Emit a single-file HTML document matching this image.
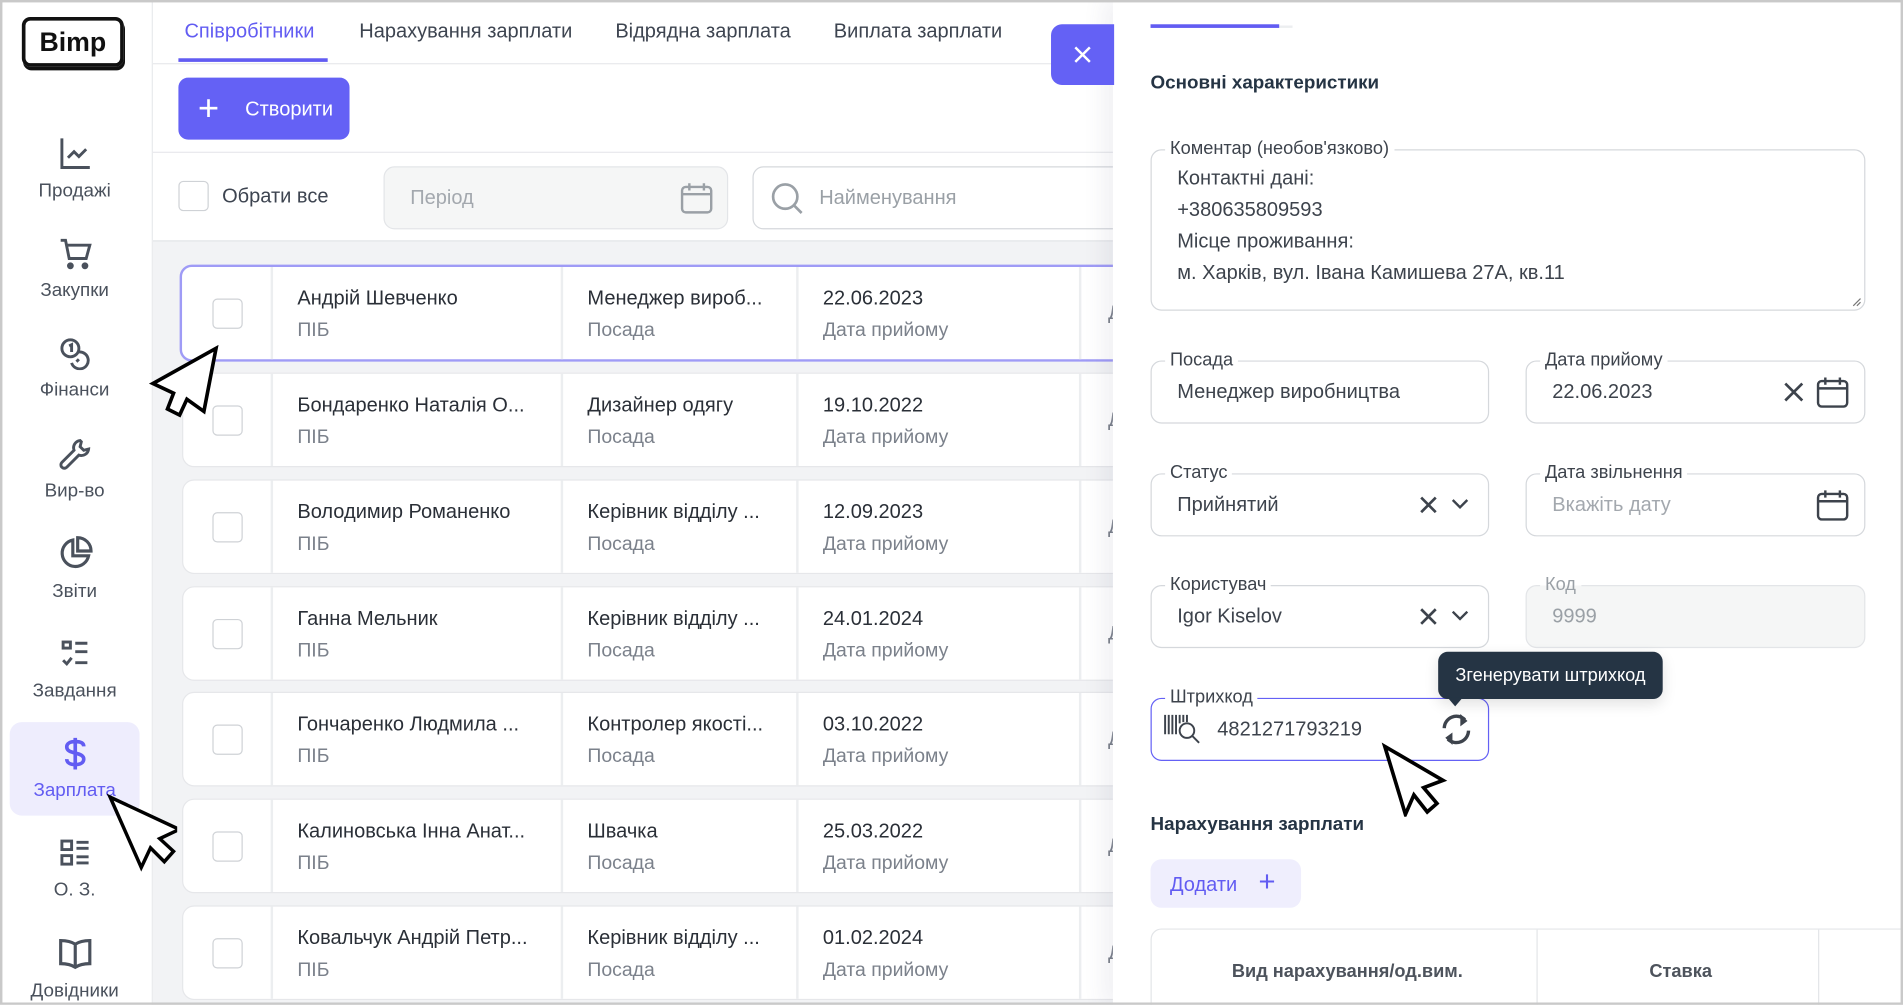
<!DOCTYPE html>
<html><head><meta charset="utf-8">
<style>
html,body{margin:0;padding:0;background:#fff;overflow:hidden;width:1903px;height:1005px}
#s{position:absolute;left:0;top:0;width:1568px;height:828px;transform:scale(1.21365);transform-origin:0 0;font-family:"Liberation Sans","Noto Sans CJK SC",sans-serif;color:#2a2f37;background:#fff;overflow:hidden}
.a{position:absolute;white-space:nowrap}
.t16{font-size:16.5px}
.nav{position:absolute;left:8px;width:107px;text-align:center;font-size:15.5px;color:#4a515c}
.nav svg{display:block;margin:0 auto 8px}
.row{position:absolute;left:150px;width:800px;height:76px;background:#fff;border:1px solid #e6e7ea;border-radius:10px}
.row .cb{position:absolute;left:24px;top:26px;width:23px;height:23px;border:1.5px solid #cfd2d6;border-radius:4px}
.row .d{position:absolute;top:0;bottom:0;width:2px;background:#eceef0}
.row .n{position:absolute;top:17px;font-size:16.5px;color:#2a2f37}
.row .l{position:absolute;top:44px;font-size:16px;color:#7b818b}
.fs{position:absolute;border:1px solid #d5d8dc;border-radius:9px;background:#fff}
.fs .lg{position:absolute;top:-10px;left:11px;background:#fff;padding:0 4px;font-size:15px;color:#3d434c}
.fs .v{position:absolute;left:21px;top:16px;font-size:16.5px;color:#3d434c}
</style></head><body><div id="s">
<div class="a" style="left:0;top:0;width:1564px;height:824px;border:2px solid #c9c9c9;z-index:50;pointer-events:none"></div>

<div class="a" style="left:0;top:0;width:125px;height:828px;background:#fff;border-right:1px solid #e9eaec"></div>
<div class="a" style="left:18px;top:14px;width:84px;height:41px;border:3px solid #111;border-radius:7px;box-shadow:1px 3px 0 #111;box-sizing:border-box;text-align:center;font-weight:bold;font-size:22px;line-height:35px;color:#111">Bimp</div>

<div class="nav" style="top:113px"><svg width="28" height="28" viewBox="0 0 28 28" fill="none" stroke="#4a515c" stroke-width="2.4"><path d="M3 1v24h23"/><path d="M8 17l5-5 4 4 6-6"/></svg>Продажі</div>
<div class="nav" style="top:195px"><svg width="28" height="28" viewBox="0 0 28 28" fill="none" stroke="#4a515c" stroke-width="2.4"><path d="M2 3h4l3 15h14l3-11H7"/><circle cx="10" cy="24" r="1.6" fill="#4a515c"/><circle cx="22" cy="24" r="1.6" fill="#4a515c"/></svg>Закупки</div>
<div class="nav" style="top:277px"><svg width="28" height="28" viewBox="0 0 28 28" fill="none" stroke="#4a515c" stroke-width="2.4"><circle cx="10" cy="10" r="7"/><path d="M9 8l2-1v6"/><path d="M17 13a7 7 0 1 1-6 9"/><path d="M17 19l-2 2"/></svg>Фінанси</div>
<div class="nav" style="top:360px"><svg width="28" height="28" viewBox="0 0 28 28" fill="none" stroke="#4a515c" stroke-width="2.4"><path d="M18 3a6 6 0 0 0-5 8L3 21a2.5 2.5 0 0 0 4 4l10-10a6 6 0 0 0 8-5l-4 1-3-3 1-4z"/></svg>Вир-во</div>
<div class="nav" style="top:441px"><svg width="30" height="30" viewBox="0 0 30 30" fill="none" stroke="#4a515c" stroke-width="2.6"><path d="M13 4a11 11 0 1 0 13 13H13z"/><path d="M17 2v11h11A11 11 0 0 0 17 2z"/></svg>Звіти</div>
<div class="nav" style="top:525px"><svg width="26" height="28" viewBox="0 0 26 28" fill="none" stroke="#4a515c" stroke-width="2.4"><rect x="3" y="4" width="6" height="5"/><path d="M13 5h10M13 12h10M13 21h10M3 19l3 3 4-5"/></svg>Завдання</div>
<div class="a" style="left:8px;top:595px;width:107px;height:77px;background:#eeedfd;border-radius:10px"></div>
<div class="nav" style="top:607px;color:#625cf2"><svg width="26" height="28" viewBox="0 0 26 28" fill="none" stroke="#625cf2" stroke-width="3"><path d="M13 1v26"/><path d="M20 8c0-3-3-4-7-4s-7 1.5-7 4.5 3 4 7 5 7 2 7 5-3 4.5-7 4.5-7-1.5-7-4.5"/></svg>Зарплата</div>
<div class="nav" style="top:689px"><svg width="28" height="28" viewBox="0 0 28 28" fill="none" stroke="#4a515c" stroke-width="2.4"><rect x="3" y="4" width="8" height="7"/><rect x="3" y="16" width="8" height="7"/><path d="M15 5h10M15 10h10M15 17h10M15 22h10"/></svg>О. З.</div>
<div class="nav" style="top:772px"><svg width="30" height="28" viewBox="0 0 30 28" fill="none" stroke="#4a515c" stroke-width="2.6"><path d="M15 6c-3-2-7-3-12-3v19c5 0 9 1 12 3 3-2 7-3 12-3V3c-5 0-9 1-12 3zM15 6v19"/></svg>Довідники</div>

<div class="a" style="left:126px;top:52px;width:800px;height:1px;background:#e8e9ec"></div>
<div class="a t16" style="left:152px;top:17px;color:#625cf2">Співробітники</div>
<div class="a" style="left:147px;top:48px;width:123px;height:3px;background:#625cf2"></div>
<div class="a t16" style="left:296px;top:17px;color:#3d4450">Нарахування зарплати</div>
<div class="a t16" style="left:507px;top:17px;color:#3d4450">Відрядна зарплата</div>
<div class="a t16" style="left:687px;top:17px;color:#3d4450">Виплата зарплати</div>
<div class="a" style="left:147px;top:64px;width:141px;height:51px;background:#6461f5;border-radius:8px;color:#fff;font-size:16.5px;line-height:51px"><span style="position:absolute;left:16px;top:0;font-size:30px;font-weight:300">+</span><span style="position:absolute;left:55px;top:1px">Створити</span></div>
<div class="a" style="left:126px;top:125px;width:800px;height:1px;background:#e8e9ec"></div>
<div class="a" style="left:147px;top:149px;width:23px;height:23px;border:1.5px solid #cfd2d6;border-radius:4px"></div>
<div class="a t16" style="left:183px;top:153px;color:#3d4450">Обрати все</div>
<div class="a" style="left:316px;top:137px;width:282px;height:50px;background:#f5f6f6;border:1px solid #e3e5e8;border-radius:9px"><span style="position:absolute;left:21px;top:16px;font-size:16.5px;color:#a3a8ae">Період</span><svg style="position:absolute;left:243px;top:11px" width="28" height="28" viewBox="0 0 28 28" fill="none" stroke="#9aa0a6" stroke-width="2"><rect x="2" y="5" width="24" height="21" rx="3"/><path d="M2 11h24M8 2v6M20 2v6"/></svg></div>
<div class="a" style="left:620px;top:137px;width:320px;height:50px;background:#fff;border:1px solid #d5d8dc;border-radius:9px"><svg style="position:absolute;left:14px;top:12px" width="28" height="28" viewBox="0 0 28 28" fill="none" stroke="#9aa0a6" stroke-width="2.2"><circle cx="12" cy="12" r="10"/><path d="M19.5 19.5l6 6"/></svg><span style="position:absolute;left:54px;top:16px;font-size:16.5px;color:#9aa0a6">Найменування</span></div>
<div class="a" style="left:126px;top:198px;width:800px;height:630px;background:#f2f3f5;border-top:1px solid #e3e5e8"></div>

<div class="row" style="top:218px;left:148px;border:2px solid #9f9bf6;height:76px"><div class="cb" style="left:25px;top:26px"></div><div class="d" style="left:73px"></div><div class="n" style="left:95px">Андрій Шевченко</div><div class="l" style="left:95px">ПІБ</div><div class="d" style="left:312px"></div><div class="n" style="left:334px">Менеджер вироб...</div><div class="l" style="left:334px">Посада</div><div class="d" style="left:506px"></div><div class="n" style="left:528px">22.06.2023</div><div class="l" style="left:528px">Дата прийому</div><div class="d" style="left:739px"></div><div class="l" style="left:763px;top:30px">Д</div></div>

<div class="row" style="top:307px"><div class="cb"></div><div class="d" style="left:72px"></div><div class="n" style="left:94px">Бондаренко Наталія О...</div><div class="l" style="left:94px">ПІБ</div><div class="d" style="left:311px"></div><div class="n" style="left:333px">Дизайнер одягу</div><div class="l" style="left:333px">Посада</div><div class="d" style="left:505px"></div><div class="n" style="left:527px">19.10.2022</div><div class="l" style="left:527px">Дата прийому</div><div class="d" style="left:738px"></div><div class="l" style="left:762px;top:30px">Д</div></div>
<div class="row" style="top:395px"><div class="cb"></div><div class="d" style="left:72px"></div><div class="n" style="left:94px">Володимир Романенко</div><div class="l" style="left:94px">ПІБ</div><div class="d" style="left:311px"></div><div class="n" style="left:333px">Керівник відділу ...</div><div class="l" style="left:333px">Посада</div><div class="d" style="left:505px"></div><div class="n" style="left:527px">12.09.2023</div><div class="l" style="left:527px">Дата прийому</div><div class="d" style="left:738px"></div><div class="l" style="left:762px;top:30px">Д</div></div>
<div class="row" style="top:483px"><div class="cb"></div><div class="d" style="left:72px"></div><div class="n" style="left:94px">Ганна Мельник</div><div class="l" style="left:94px">ПІБ</div><div class="d" style="left:311px"></div><div class="n" style="left:333px">Керівник відділу ...</div><div class="l" style="left:333px">Посада</div><div class="d" style="left:505px"></div><div class="n" style="left:527px">24.01.2024</div><div class="l" style="left:527px">Дата прийому</div><div class="d" style="left:738px"></div><div class="l" style="left:762px;top:30px">Д</div></div>
<div class="row" style="top:570px"><div class="cb"></div><div class="d" style="left:72px"></div><div class="n" style="left:94px">Гончаренко Людмила ...</div><div class="l" style="left:94px">ПІБ</div><div class="d" style="left:311px"></div><div class="n" style="left:333px">Контролер якості...</div><div class="l" style="left:333px">Посада</div><div class="d" style="left:505px"></div><div class="n" style="left:527px">03.10.2022</div><div class="l" style="left:527px">Дата прийому</div><div class="d" style="left:738px"></div><div class="l" style="left:762px;top:30px">Д</div></div>
<div class="row" style="top:658px"><div class="cb"></div><div class="d" style="left:72px"></div><div class="n" style="left:94px">Калиновська Інна Анат...</div><div class="l" style="left:94px">ПІБ</div><div class="d" style="left:311px"></div><div class="n" style="left:333px">Швачка</div><div class="l" style="left:333px">Посада</div><div class="d" style="left:505px"></div><div class="n" style="left:527px">25.03.2022</div><div class="l" style="left:527px">Дата прийому</div><div class="d" style="left:738px"></div><div class="l" style="left:762px;top:30px">Д</div></div>
<div class="row" style="top:746px"><div class="cb"></div><div class="d" style="left:72px"></div><div class="n" style="left:94px">Ковальчук Андрій Петр...</div><div class="l" style="left:94px">ПІБ</div><div class="d" style="left:311px"></div><div class="n" style="left:333px">Керівник відділу ...</div><div class="l" style="left:333px">Посада</div><div class="d" style="left:505px"></div><div class="n" style="left:527px">01.02.2024</div><div class="l" style="left:527px">Дата прийому</div><div class="d" style="left:738px"></div><div class="l" style="left:762px;top:30px">Д</div></div>

<div class="a" style="left:866px;top:20px;width:52px;height:50px;background:#6461f5;border-radius:9px 0 0 9px;z-index:5"><svg style="position:absolute;left:19px;top:18px" width="14" height="14" viewBox="0 0 14 14" stroke="#fff" stroke-width="2"><path d="M1 1l12 12M13 1L1 13"/></svg></div>

<div class="a" style="left:917px;top:0;width:651px;height:828px;background:#fff;box-shadow:-8px 0 16px rgba(80,80,120,0.08)"></div>
<div class="a" style="left:948px;top:21px;width:117px;height:2px;background:#eceef0"></div>
<div class="a" style="left:948px;top:20px;width:106px;height:3px;background:#625cf2"></div>
<div class="a" style="left:948px;top:60px;font-size:15.5px;font-weight:bold;color:#253444">Основні характеристики</div>

<div class="fs" style="left:948px;top:123px;width:587px;height:131px"><div class="lg">Коментар (необов'язково)</div>
<div class="a" style="left:21px;top:10px;font-size:16.5px;color:#3d434c;line-height:26px;white-space:pre">Контактні дані:
+380635809593
Місце проживання:
м. Харків, вул. Івана Камишева 27А, кв.11</div>
<svg style="position:absolute;right:2px;bottom:2px" width="8" height="8" stroke="#777" stroke-width="1"><path d="M1 7l6-6M4 7l3-3"/></svg></div>

<div class="fs" style="left:948px;top:297px;width:277px;height:50px"><div class="lg">Посада</div><div class="v">Менеджер виробництва</div></div>
<div class="fs" style="left:1257px;top:297px;width:278px;height:50px"><div class="lg">Дата прийому</div><div class="v">22.06.2023</div>
<svg style="position:absolute;left:212px;top:17px" width="16" height="16" stroke="#3d434c" stroke-width="2.2"><path d="M1 1l14 14M15 1L1 15"/></svg>
<svg style="position:absolute;left:238px;top:11px" width="28" height="28" viewBox="0 0 28 28" fill="none" stroke="#3d434c" stroke-width="2"><rect x="2" y="5" width="24" height="21" rx="3"/><path d="M2 11h24M8 2v6M20 2v6"/></svg></div>

<div class="fs" style="left:948px;top:390px;width:277px;height:50px"><div class="lg">Статус</div><div class="v">Прийнятий</div>
<svg style="position:absolute;left:221px;top:18px" width="14" height="14" stroke="#3d434c" stroke-width="2.2"><path d="M1 1l12 12M13 1L1 13"/></svg>
<svg style="position:absolute;left:247px;top:20px" width="14" height="9" fill="none" stroke="#3d434c" stroke-width="2"><path d="M1 1l6 6 6-6"/></svg></div>
<div class="fs" style="left:1257px;top:390px;width:278px;height:50px"><div class="lg">Дата звільнення</div><div class="v" style="color:#a3a8ae">Вкажіть дату</div>
<svg style="position:absolute;left:238px;top:11px" width="28" height="28" viewBox="0 0 28 28" fill="none" stroke="#3d434c" stroke-width="2"><rect x="2" y="5" width="24" height="21" rx="3"/><path d="M2 11h24M8 2v6M20 2v6"/></svg></div>

<div class="fs" style="left:948px;top:482px;width:277px;height:50px"><div class="lg">Користувач</div><div class="v">Igor Kiselov</div>
<svg style="position:absolute;left:221px;top:18px" width="14" height="14" stroke="#3d434c" stroke-width="2.2"><path d="M1 1l12 12M13 1L1 13"/></svg>
<svg style="position:absolute;left:247px;top:20px" width="14" height="9" fill="none" stroke="#3d434c" stroke-width="2"><path d="M1 1l6 6 6-6"/></svg></div>
<div class="fs" style="left:1257px;top:482px;width:278px;height:50px;background:#f5f6f6;border-color:#e3e5e8"><div class="lg" style="color:#9aa0a6;background:linear-gradient(#fff 55%,#f5f6f6 55%)">Код</div><div class="v" style="color:#9aa0a6">9999</div></div>

<div class="fs" style="left:948px;top:575px;width:277px;height:50px;border-color:#6461f5"><div class="lg">Штрихкод</div>
<svg style="position:absolute;left:9px;top:12px" width="36" height="26" viewBox="0 0 36 26" fill="none" stroke="#3d434c" stroke-width="1.6"><path d="M2 1v16M5 1v16M8 1v16M11 1v16M14 1v7M17 1v6M20 1v6"/><circle cx="20" cy="14" r="6"/><path d="M24 18l6 6"/></svg>
<div class="v" style="left:54px">4821271793219</div>
<svg style="position:absolute;left:237px;top:11px" width="28" height="28" viewBox="0 0 28 28" fill="none" stroke="#3d434c" stroke-width="2.8"><path d="M4 13a10 10 0 0 1 17-7"/><path d="M24 15a10 10 0 0 1-17 7"/><path d="M18 3l4 4-4 3z" fill="#3d434c" stroke-width="1.5"/><path d="M10 25l-4-4 4-3z" fill="#3d434c" stroke-width="1.5"/></svg></div>

<div class="a" style="left:1185px;top:537px;width:185px;height:39px;background:#253444;border-radius:8px;color:#fff;font-size:15px;line-height:40px;text-align:center;box-shadow:0 4px 12px rgba(0,0,0,0.12)">Згенерувати штрихкод</div>
<div class="a" style="left:1193px;top:575px;width:0;height:0;border-left:6px solid transparent;border-right:6px solid transparent;border-top:7px solid #253444"></div>

<div class="a" style="left:948px;top:671px;font-size:15.5px;font-weight:bold;color:#253444">Нарахування зарплати</div>
<div class="a" style="left:948px;top:708px;width:124px;height:40px;background:#efeefd;border-radius:9px;color:#625cf2;font-size:16.5px;line-height:42px"><span style="position:absolute;left:16px">Додати</span><span style="position:absolute;left:89px;top:-2px;font-size:24px;font-weight:300">+</span></div>

<div class="a" style="left:948px;top:765px;width:640px;height:80px;border:1px solid #e3e5e8;border-radius:9px"></div>
<div class="a" style="left:1266px;top:766px;width:1px;height:62px;background:#e3e5e8"></div>
<div class="a" style="left:1498px;top:766px;width:1px;height:62px;background:#e3e5e8"></div>
<div class="a" style="left:1015px;top:792px;font-size:15px;font-weight:bold;color:#4d535c">Вид нарахування/од.вим.</div>
<div class="a" style="left:1359px;top:792px;font-size:15px;font-weight:bold;color:#4d535c">Ставка</div>

<svg class="a" style="left:122px;top:284px;z-index:10" width="60" height="64" viewBox="0 0 60 64"><path d="M56 3L4 32l17 8-5 13 10 5 6-13 14 10z" fill="#fff" stroke="#000" stroke-width="3"/></svg>
<svg class="a" style="left:86px;top:653px;z-index:10" width="60" height="66" viewBox="0 0 60 66"><path d="M5 4l27 61 8-17 12 12 8-9-12-11 17-8z" fill="#fff" stroke="#000" stroke-width="3" transform="scale(0.95)"/></svg>
<svg class="a" style="left:1136px;top:611px;z-index:10" width="60" height="62" viewBox="0 0 60 62"><path d="M5 4l17 56 7-16 11 14 8-7-11-13 16-6z" fill="#fff" stroke="#000" stroke-width="3"/></svg>
</div></body></html>
